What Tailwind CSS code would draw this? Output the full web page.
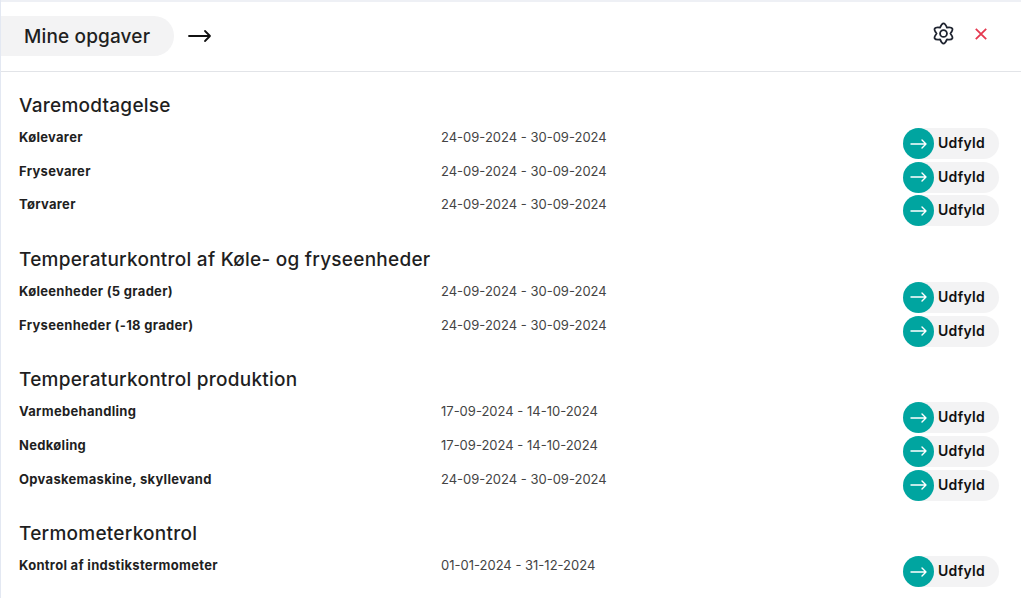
<!DOCTYPE html>
<html lang="da">
<head>
    <meta charset="UTF-8">
    <meta name="viewport" content="width=device-width, initial-scale=1.0">
    <title>Mine opgaver</title>
    <script src="https://cdn.jsdelivr.net/npm/@tailwindcss/browser@4"></script>
</head>
<body class="bg-white font-['Inter',sans-serif] text-[#1f1f1f] overflow-hidden">
    <div class="h-[598px] border-l border-[#e3e8f2] overflow-hidden">

        <!-- header -->
        <header class="h-[72px] border-t-2 border-t-[#eef0f5] border-b border-b-[#e2e4e8] pt-[14px] pr-[34px] flex items-start justify-between">
            <div class="flex items-center">
                <div class="h-10 w-[173px] bg-[#f3f3f4] rounded-r-[20px] pl-[23px] pt-[2px] flex items-center text-[19px] font-medium tracking-[0.15px]">Mine opgaver</div>
                <svg class="ml-[14px]" width="24" height="14" viewBox="0 0 24 14" fill="none" stroke="#111" stroke-width="1.8" stroke-linecap="round" stroke-linejoin="round"><path d="M1 7h21M17 2l5 5-5 5"/></svg>
            </div>
            <div class="flex items-center gap-[20px] mt-[6px]">
                <svg width="23" height="23" viewBox="0 0 24 24" fill="none" stroke="#1f2430" stroke-width="1.9" stroke-linejoin="round"><path d="M8.4 5.8Q12-2.8 15.6 5.8 24.9 4.6 19.2 12 24.9 19.4 15.6 18.2 12 26.8 8.4 18.2-.9 19.4 4.8 12-.9 4.6 8.4 5.8Z"/><circle cx="12" cy="12" r="3.6"/></svg>
                <svg width="12" height="12" viewBox="0 0 12 12" fill="none" stroke="#e5384f" stroke-width="1.8"><path d="M.8.8l10.4 10.4M11.2.8L.8 11.2"/></svg>
            </div>
        </header>

        <main class="pt-[19px] pl-[18px] pr-[22px]">
            <section class="mb-[23px]">
                <h2 class="h-[30px] leading-[30px] text-[19px] font-medium tracking-[0.25px]">Varemodtagelse</h2>
                <div class="flex h-[33.67px]">
                    <div class="w-[422px] leading-[33px] text-[13px] font-bold tracking-[0.3px]">Kølevarer</div>
                    <div class="flex-1 leading-[33px] text-[13px] text-[#444]">24-09-2024 - 30-09-2024</div>
                    <a class="relative mt-[7px] h-[31px] w-[96px] bg-[#f3f3f4] rounded-full pl-[35px] pb-[2px] flex items-center text-[14px] font-semibold tracking-[0.3px] text-[#111]">
                        <span class="absolute left-0 top-0 size-[31px] rounded-full bg-[#00a5a0] flex items-center justify-center"><svg width="18" height="12" viewBox="0 0 18 12" fill="none" stroke="#fff" stroke-width="1.4" stroke-linecap="round" stroke-linejoin="round"><path d="M1 6h15M12 2l4 4-4 4"/></svg></span>Udfyld</a>
                </div>
                <div class="flex h-[33.67px]">
                    <div class="w-[422px] leading-[33px] text-[13px] font-bold tracking-[0.3px]">Frysevarer</div>
                    <div class="flex-1 leading-[33px] text-[13px] text-[#444]">24-09-2024 - 30-09-2024</div>
                    <a class="relative mt-[7px] h-[31px] w-[96px] bg-[#f3f3f4] rounded-full pl-[35px] pb-[2px] flex items-center text-[14px] font-semibold tracking-[0.3px] text-[#111]">
                        <span class="absolute left-0 top-0 size-[31px] rounded-full bg-[#00a5a0] flex items-center justify-center"><svg width="18" height="12" viewBox="0 0 18 12" fill="none" stroke="#fff" stroke-width="1.4" stroke-linecap="round" stroke-linejoin="round"><path d="M1 6h15M12 2l4 4-4 4"/></svg></span>Udfyld</a>
                </div>
                <div class="flex h-[33.67px]">
                    <div class="w-[422px] leading-[33px] text-[13px] font-bold tracking-[0.3px]">Tørvarer</div>
                    <div class="flex-1 leading-[33px] text-[13px] text-[#444]">24-09-2024 - 30-09-2024</div>
                    <a class="relative mt-[7px] h-[31px] w-[96px] bg-[#f3f3f4] rounded-full pl-[35px] pb-[2px] flex items-center text-[14px] font-semibold tracking-[0.3px] text-[#111]">
                        <span class="absolute left-0 top-0 size-[31px] rounded-full bg-[#00a5a0] flex items-center justify-center"><svg width="18" height="12" viewBox="0 0 18 12" fill="none" stroke="#fff" stroke-width="1.4" stroke-linecap="round" stroke-linejoin="round"><path d="M1 6h15M12 2l4 4-4 4"/></svg></span>Udfyld</a>
                </div>
            </section>

            <section class="mb-[23px]">
                <h2 class="h-[30px] leading-[30px] text-[19px] font-medium tracking-[0.25px]">Temperaturkontrol af Køle- og fryseenheder</h2>
                <div class="flex h-[33.67px]">
                    <div class="w-[422px] leading-[33px] text-[13px] font-bold tracking-[0.3px]">Køleenheder (5 grader)</div>
                    <div class="flex-1 leading-[33px] text-[13px] text-[#444]">24-09-2024 - 30-09-2024</div>
                    <a class="relative mt-[7px] h-[31px] w-[96px] bg-[#f3f3f4] rounded-full pl-[35px] pb-[2px] flex items-center text-[14px] font-semibold tracking-[0.3px] text-[#111]">
                        <span class="absolute left-0 top-0 size-[31px] rounded-full bg-[#00a5a0] flex items-center justify-center"><svg width="18" height="12" viewBox="0 0 18 12" fill="none" stroke="#fff" stroke-width="1.4" stroke-linecap="round" stroke-linejoin="round"><path d="M1 6h15M12 2l4 4-4 4"/></svg></span>Udfyld</a>
                </div>
                <div class="flex h-[33.67px]">
                    <div class="w-[422px] leading-[33px] text-[13px] font-bold tracking-[0.3px]">Fryseenheder (-18 grader)</div>
                    <div class="flex-1 leading-[33px] text-[13px] text-[#444]">24-09-2024 - 30-09-2024</div>
                    <a class="relative mt-[7px] h-[31px] w-[96px] bg-[#f3f3f4] rounded-full pl-[35px] pb-[2px] flex items-center text-[14px] font-semibold tracking-[0.3px] text-[#111]">
                        <span class="absolute left-0 top-0 size-[31px] rounded-full bg-[#00a5a0] flex items-center justify-center"><svg width="18" height="12" viewBox="0 0 18 12" fill="none" stroke="#fff" stroke-width="1.4" stroke-linecap="round" stroke-linejoin="round"><path d="M1 6h15M12 2l4 4-4 4"/></svg></span>Udfyld</a>
                </div>
            </section>

            <section class="mb-[23px]">
                <h2 class="h-[30px] leading-[30px] text-[19px] font-medium tracking-[0.25px]">Temperaturkontrol produktion</h2>
                <div class="flex h-[33.67px]">
                    <div class="w-[422px] leading-[33px] text-[13px] font-bold tracking-[0.3px]">Varmebehandling</div>
                    <div class="flex-1 leading-[33px] text-[13px] text-[#444]">17-09-2024 - 14-10-2024</div>
                    <a class="relative mt-[7px] h-[31px] w-[96px] bg-[#f3f3f4] rounded-full pl-[35px] pb-[2px] flex items-center text-[14px] font-semibold tracking-[0.3px] text-[#111]">
                        <span class="absolute left-0 top-0 size-[31px] rounded-full bg-[#00a5a0] flex items-center justify-center"><svg width="18" height="12" viewBox="0 0 18 12" fill="none" stroke="#fff" stroke-width="1.4" stroke-linecap="round" stroke-linejoin="round"><path d="M1 6h15M12 2l4 4-4 4"/></svg></span>Udfyld</a>
                </div>
                <div class="flex h-[33.67px]">
                    <div class="w-[422px] leading-[33px] text-[13px] font-bold tracking-[0.3px]">Nedkøling</div>
                    <div class="flex-1 leading-[33px] text-[13px] text-[#444]">17-09-2024 - 14-10-2024</div>
                    <a class="relative mt-[7px] h-[31px] w-[96px] bg-[#f3f3f4] rounded-full pl-[35px] pb-[2px] flex items-center text-[14px] font-semibold tracking-[0.3px] text-[#111]">
                        <span class="absolute left-0 top-0 size-[31px] rounded-full bg-[#00a5a0] flex items-center justify-center"><svg width="18" height="12" viewBox="0 0 18 12" fill="none" stroke="#fff" stroke-width="1.4" stroke-linecap="round" stroke-linejoin="round"><path d="M1 6h15M12 2l4 4-4 4"/></svg></span>Udfyld</a>
                </div>
                <div class="flex h-[33.67px]">
                    <div class="w-[422px] leading-[33px] text-[13px] font-bold tracking-[0.3px]">Opvaskemaskine, skyllevand</div>
                    <div class="flex-1 leading-[33px] text-[13px] text-[#444]">24-09-2024 - 30-09-2024</div>
                    <a class="relative mt-[7px] h-[31px] w-[96px] bg-[#f3f3f4] rounded-full pl-[35px] pb-[2px] flex items-center text-[14px] font-semibold tracking-[0.3px] text-[#111]">
                        <span class="absolute left-0 top-0 size-[31px] rounded-full bg-[#00a5a0] flex items-center justify-center"><svg width="18" height="12" viewBox="0 0 18 12" fill="none" stroke="#fff" stroke-width="1.4" stroke-linecap="round" stroke-linejoin="round"><path d="M1 6h15M12 2l4 4-4 4"/></svg></span>Udfyld</a>
                </div>
            </section>

            <section>
                <h2 class="h-[30px] leading-[30px] text-[19px] font-medium tracking-[0.25px]">Termometerkontrol</h2>
                <div class="flex h-[33.67px]">
                    <div class="w-[422px] leading-[33px] text-[13px] font-bold tracking-[0.3px]">Kontrol af indstikstermometer</div>
                    <div class="flex-1 leading-[33px] text-[13px] text-[#444]">01-01-2024 - 31-12-2024</div>
                    <a class="relative mt-[7px] h-[31px] w-[96px] bg-[#f3f3f4] rounded-full pl-[35px] pb-[2px] flex items-center text-[14px] font-semibold tracking-[0.3px] text-[#111]">
                        <span class="absolute left-0 top-0 size-[31px] rounded-full bg-[#00a5a0] flex items-center justify-center"><svg width="18" height="12" viewBox="0 0 18 12" fill="none" stroke="#fff" stroke-width="1.4" stroke-linecap="round" stroke-linejoin="round"><path d="M1 6h15M12 2l4 4-4 4"/></svg></span>Udfyld</a>
                </div>
            </section>
        </main>
    </div>
</body>
</html>
